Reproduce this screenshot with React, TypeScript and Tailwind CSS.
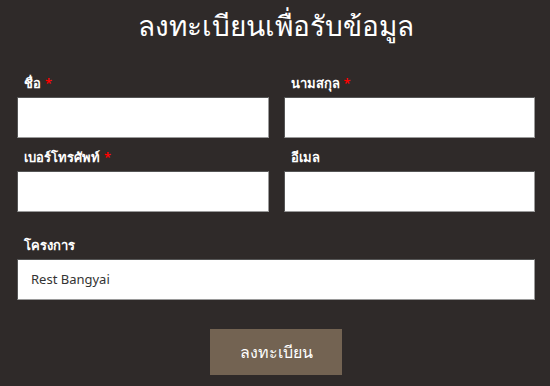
import React from "react";

const Field = ({
  label,
  required,
  value,
}: {
  label: string;
  required?: boolean;
  value?: string;
}) => {
  return (
    <div className="flex flex-col">
      <label className="h-5 pl-[7px] text-[13px] font-semibold leading-5 text-white">
        {label}
        {required && <span className="ml-1 text-[#ff0000]">*</span>}
      </label>
      <div className="mt-[4px] flex h-[41px] items-center border border-[#9a9a9a] border-t-[#555] border-l-[#555] bg-white px-[13px] text-[13px] text-[#333]">
        {value}
      </div>
    </div>
  );
};

export default function App() {
  return (
    <div
      className="flex h-[386px] w-[550px] flex-col bg-[#2f2a29] pl-[17px] pr-[15px]"
      style={{ fontFamily: '"Noto Sans", "Open Sans", sans-serif' }}
    >
      <h1 className="pt-[5px] text-center text-[28px] leading-[40px] font-normal text-white">
        ลงทะเบียนเพื่อรับข้อมูล
      </h1>

      <div className="mt-[28px] grid grid-cols-2 gap-x-[15px]">
        <Field label="ชื่อ" required />
        <Field label="นามสกุล" required />
      </div>

      <div className="mt-[9px] grid grid-cols-2 gap-x-[15px]">
        <Field label="เบอร์โทรศัพท์" required />
        <Field label="อีเมล" />
      </div>

      <div className="mt-[23px]">
        <Field label="โครงการ" value="Rest Bangyai" />
      </div>

      <div className="mt-[29px] flex justify-center">
        <button className="h-[46px] w-[132px] bg-[#736352] text-[16px] text-white">
          ลงทะเบียน
        </button>
      </div>
    </div>
  );
}
